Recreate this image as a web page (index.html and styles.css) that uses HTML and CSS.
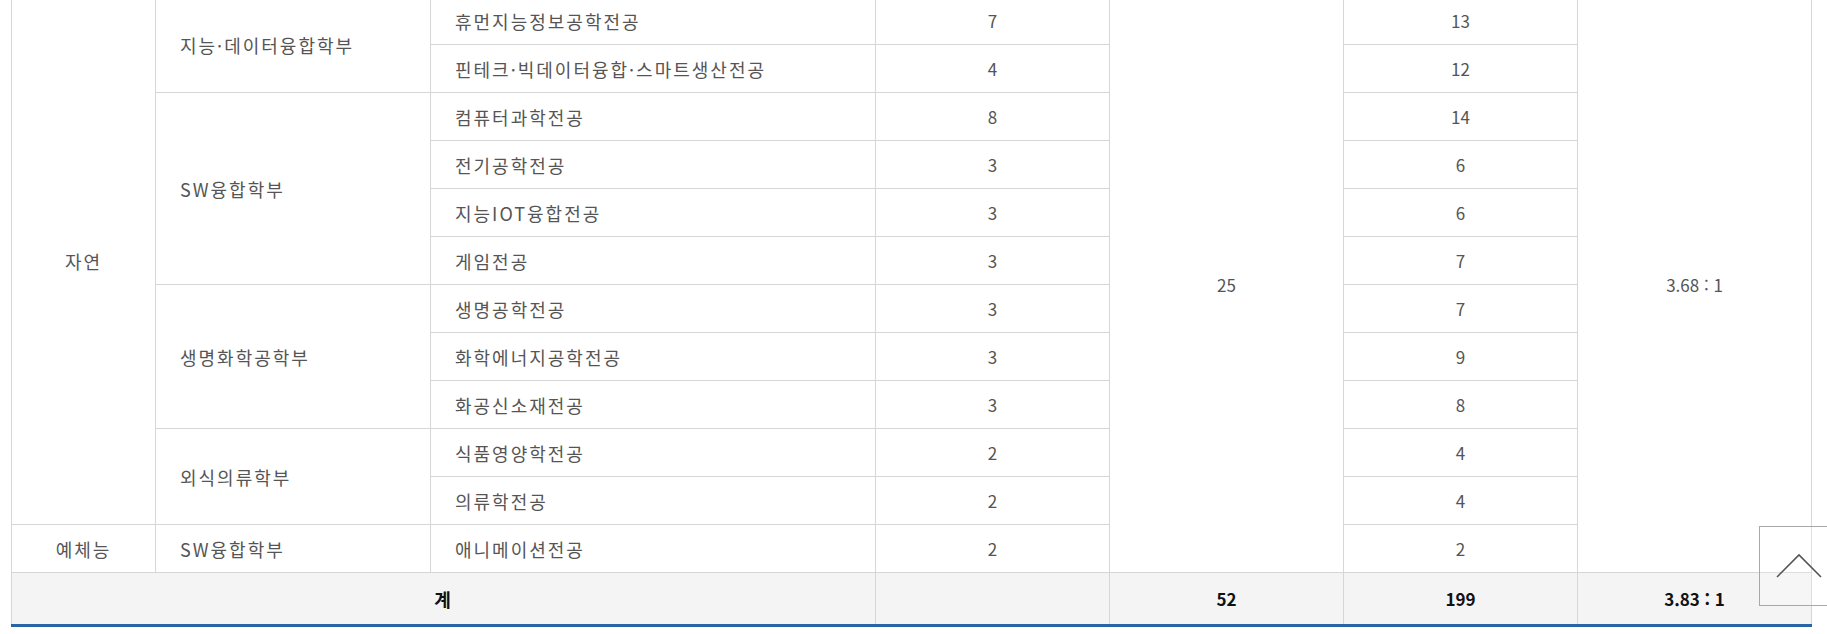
FILE: index.html
```html
<!DOCTYPE html>
<html lang="ko">

<head>
    <meta charset="UTF-8">
    <meta name="viewport" content="width=device-width, initial-scale=1.0">
    <title>모집결과</title>
    <link rel="stylesheet" href="styles.css">
</head>

<body>
    <div class="tbl_wrap">
        <table class="tbl_result">
            <colgroup>
                <col class="c_field">
                <col class="c_school">
                <col class="c_major">
                <col class="c_num">
                <col class="c_num">
                <col class="c_num">
                <col class="c_num">
            </colgroup>
            <tbody>
                <tr>
                    <td rowspan="11" class="ko">자연</td>
                    <td rowspan="2" class="tl">지능·데이터융합학부</td>
                    <td class="tl">휴먼지능정보공학전공</td>
                    <td>7</td>
                    <td rowspan="12">25</td>
                    <td>13</td>
                    <td rowspan="12">3.68 : 1</td>
                </tr>
                <tr>
                    <td class="tl">핀테크·빅데이터융합·스마트생산전공</td>
                    <td>4</td>
                    <td>12</td>
                </tr>
                <tr>
                    <td rowspan="4" class="tl">SW융합학부</td>
                    <td class="tl">컴퓨터과학전공</td>
                    <td>8</td>
                    <td>14</td>
                </tr>
                <tr>
                    <td class="tl">전기공학전공</td>
                    <td>3</td>
                    <td>6</td>
                </tr>
                <tr>
                    <td class="tl">지능IOT융합전공</td>
                    <td>3</td>
                    <td>6</td>
                </tr>
                <tr>
                    <td class="tl">게임전공</td>
                    <td>3</td>
                    <td>7</td>
                </tr>
                <tr>
                    <td rowspan="3" class="tl">생명화학공학부</td>
                    <td class="tl">생명공학전공</td>
                    <td>3</td>
                    <td>7</td>
                </tr>
                <tr>
                    <td class="tl">화학에너지공학전공</td>
                    <td>3</td>
                    <td>9</td>
                </tr>
                <tr>
                    <td class="tl">화공신소재전공</td>
                    <td>3</td>
                    <td>8</td>
                </tr>
                <tr>
                    <td rowspan="2" class="tl">외식의류학부</td>
                    <td class="tl">식품영양학전공</td>
                    <td>2</td>
                    <td>4</td>
                </tr>
                <tr>
                    <td class="tl">의류학전공</td>
                    <td>2</td>
                    <td>4</td>
                </tr>
                <tr>
                    <td class="ko">예체능</td>
                    <td class="tl">SW융합학부</td>
                    <td class="tl">애니메이션전공</td>
                    <td>2</td>
                    <td>2</td>
                </tr>
            </tbody>
            <tfoot>
                <tr>
                    <td colspan="3" class="ko">계</td>
                    <td></td>
                    <td>52</td>
                    <td>199</td>
                    <td>3.83 : 1</td>
                </tr>
            </tfoot>
        </table>
    </div>

    <a href="javascript:;" class="btn_top">
        <svg width="78" height="78" viewBox="0 0 78 78">
            <polyline points="17,50 39,28 61,50" fill="none" stroke="#555" stroke-width="1.6"/>
        </svg>
    </a>
</body>

</html>
```

FILE: styles.css
```css
* {
    padding: 0;
    margin: 0;
    box-sizing: border-box;
}

body {
    font-family: "Noto Sans CJK KR", "Noto Sans", sans-serif;
    color: #555;
    background-color: #fff;
}

a {
    text-decoration: none;
}

.tbl_wrap {
    margin: -4px 16px 0 11px;
}

.tbl_result {
    width: 100%;
    border-collapse: collapse;
    table-layout: fixed;
    font-size: 17px;
}

.c_field {
    width: 144px;
}

.c_school {
    width: 275px;
}

.c_major {
    width: 445px;
}

.c_num {
    width: 234px;
}

.tbl_result td {
    height: 48px;
    padding: 0 24px;
    border: 1px solid #d6d6d6;
    text-align: center;
    vertical-align: middle;
    line-height: 22px;
}

/* 한글 셀 */
.tbl_result td.tl,
.tbl_result td.ko {
    font-size: 18px;
    letter-spacing: 2px;
}

.tbl_result td.tl {
    text-align: left;
}

.tbl_result tfoot td {
    height: 53px;
    background-color: #f4f4f4;
    color: #111;
    font-weight: bold;
    border-bottom: 3px solid #2a64a6;
}

.btn_top {
    position: fixed;
    right: -12px;
    bottom: 28px;
    width: 80px;
    height: 80px;
    border: 1px solid #a8a8a8;
    background-color: rgba(255, 255, 255, .2);
}

.btn_top svg {
    display: block;
}
```
